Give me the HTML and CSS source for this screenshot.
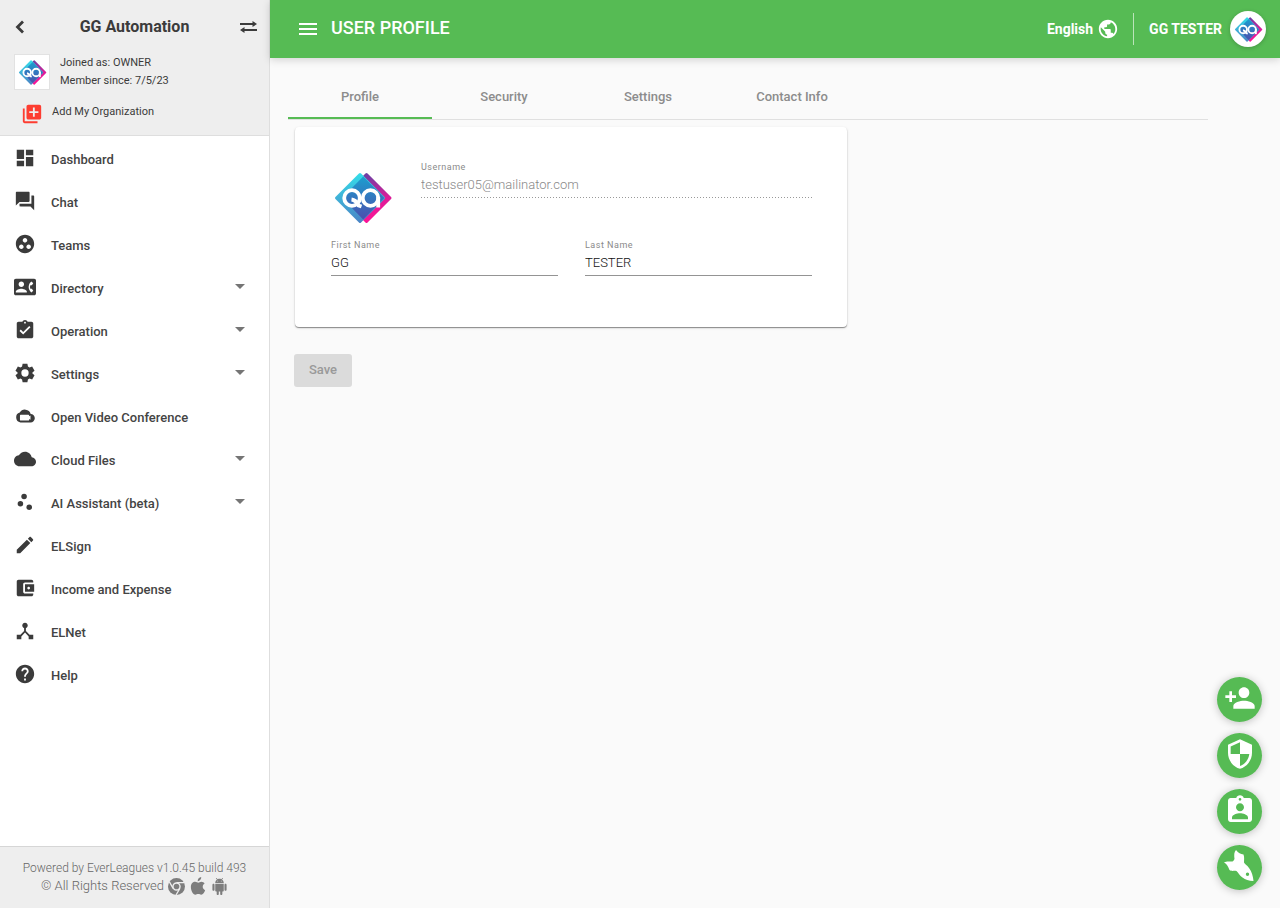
FILE: index.html
```html
<!DOCTYPE html>
<html lang="en">
<head>
<meta charset="utf-8">
<title>User Profile</title>
<meta name="viewport" content="width=device-width, initial-scale=1">
<link rel="stylesheet" href="styles.css">
</head>
<body>
<svg class="defs" aria-hidden="true">
  <defs>
    <linearGradient id="cyan" x1="0" y1="0" x2="0" y2="1"><stop offset="0" stop-color="#35dbe8"/><stop offset="1" stop-color="#4a86c6"/></linearGradient>
    <linearGradient id="pink" x1="0" y1="0" x2="0" y2="1"><stop offset="0" stop-color="#6d3fa4"/><stop offset=".5" stop-color="#dd1c98"/><stop offset="1" stop-color="#fa1496"/></linearGradient>
    <linearGradient id="blue" x1="0" y1="0" x2="0" y2="1"><stop offset="0" stop-color="#1c9ecf"/><stop offset="1" stop-color="#4a4fae"/></linearGradient>
    <symbol id="logo" viewBox="0 0 64 64">
      <path d="M35.500 8.500 59 32 35.500 55.500 12 32z" fill="url(#pink)" stroke="url(#pink)" stroke-width="3" stroke-linejoin="round"/>
      <path d="M29 8.500 52.500 32 29 55.500 5.500 32z" fill="url(#cyan)" stroke="url(#cyan)" stroke-width="3" stroke-linejoin="round"/>
      <path d="M32.200 10.500 53.500 32 32.200 53.500 15 36V28z" fill="url(#blue)"/>
      <g fill="none" stroke="#fff" stroke-width="3.800">
        <circle cx="21" cy="32" r="7.800"/>
        <path d="M20.500 33.500Q25 34 27.500 39.500L30.500 40.500"/>
        <circle cx="39.500" cy="32" r="7.800"/>
        <path d="M47.200 31v10.500"/>
      </g>
    </symbol>
  </defs>
</svg>
<div class="app">
  <aside class="sidebar">
    <div class="org">
      <div class="org-top">
        <button class="icon-btn" type="button" aria-label="Back"><svg width="10" height="14" viewBox="0 0 10 14"><path d="M8 1.500 2.500 7 8 12.500" fill="none" stroke="#3b3b3b" stroke-width="2.800"/></svg></button>
        <h2 class="org-name">GG Automation</h2>
        <button class="icon-btn" type="button" aria-label="Switch organization"><svg width="17" height="12" viewBox="0 0 17 12"><path d="M0 3h14M3 9h14" stroke="#3b3b3b" stroke-width="1.800"/><path d="M12.500 0 17 3l-4.500 3zM4.500 6 0 9l4.500 3z" fill="#3b3b3b"/></svg></button>
      </div>
      <div class="org-info">
        <span class="org-logo"><svg width="31" height="31" aria-hidden="true"><use href="#logo"/></svg></span>
        <p class="org-text">Joined as: OWNER<br>Member since: 7/5/23</p>
      </div>
      <button class="add-org" type="button"><svg width="22" height="22" viewBox="0 0 24 24"><path fill="#fd3d31" d="M4 6H2v14c0 1.100.9 2 2 2h14v-2H4V6zm16-4H8c-1.100 0-2 .9-2 2v12c0 1.100.9 2 2 2h12c1.100 0 2-.9 2-2V4c0-1.100-.9-2-2-2zm-1 9h-4v4h-2v-4H9V9h4V5h2v4h4v2z"/></svg><span>Add My Organization</span></button>
    </div>
    <nav class="nav">
      <a class="nav-item" href="#"><svg viewBox="0 0 24 24"><path d="M3 13h8V3H3v10zm0 8h8v-6H3v6zm10 0h8V11h-8v10zm0-18v6h8V3h-8z"/></svg><span>Dashboard</span></a>
      <a class="nav-item" href="#"><svg viewBox="0 0 24 24"><path d="M21 6h-2v9H6v2c0 .55.45 1 1 1h11l4 4V7c0-.55-.45-1-1-1zm-4 6V3c0-.55-.45-1-1-1H3c-.55 0-1 .45-1 1v14l4-4h10c.55 0 1-.45 1-1z"/></svg><span>Chat</span></a>
      <a class="nav-item" href="#"><svg viewBox="0 0 24 24"><path d="M12 2C6.480 2 2 6.480 2 12s4.480 10 10 10 10-4.480 10-10S17.520 2 12 2zM8 17.500c-1.380 0-2.500-1.120-2.500-2.500s1.120-2.500 2.500-2.500 2.500 1.120 2.500 2.500-1.120 2.500-2.500 2.500zM9.500 8c0-1.380 1.120-2.500 2.500-2.500s2.500 1.120 2.500 2.500-1.120 2.500-2.500 2.500S9.500 9.380 9.500 8zm6.500 9.500c-1.380 0-2.500-1.120-2.500-2.500s1.120-2.500 2.500-2.500 2.500 1.120 2.500 2.500-1.120 2.500-2.500 2.500z"/></svg><span>Teams</span></a>
      <a class="nav-item has-menu" href="#"><svg viewBox="0 0 24 24"><path d="M22 3H2C.9 3 0 3.900 0 5v14c0 1.100.9 2 2 2h20c1.100 0 1.990-.9 1.990-2L24 5c0-1.100-.9-2-2-2zM8 6c1.660 0 3 1.340 3 3s-1.340 3-3 3-3-1.340-3-3 1.340-3 3-3zm6 12H2v-1c0-2 4-3.100 6-3.100s6 1.100 6 3.100v1zm3.850-4h1.640L21 16l-1.990 1.990c-1.310-.98-2.280-2.380-2.730-3.990-.18-.64-.28-1.310-.28-2s.1-1.360.28-2c.45-1.620 1.420-3.010 2.730-3.990L21 8l-1.510 2h-1.640c-.22.630-.35 1.300-.35 2s.13 1.370.35 2z"/></svg><span>Directory</span></a>
      <a class="nav-item has-menu" href="#"><svg viewBox="0 0 24 24"><path d="M19 3h-4.180C14.400 1.840 13.300 1 12 1c-1.300 0-2.400.84-2.820 2H5c-1.100 0-2 .9-2 2v14c0 1.100.9 2 2 2h14c1.100 0 2-.9 2-2V5c0-1.100-.9-2-2-2zm-7 0c.55 0 1 .45 1 1s-.45 1-1 1-1-.45-1-1 .45-1 1-1zm-2 14l-4-4 1.410-1.410L10 14.170l6.590-6.590L18 9l-8 8z"/></svg><span>Operation</span></a>
      <a class="nav-item has-menu" href="#"><svg viewBox="0 0 24 24"><path fill-rule="evenodd" d="M9.400 2h5.200l.6 3 1.700 1 2.900-1 2.600 4.500L20.100 11.500v1L22.400 14.500 19.800 19l-2.900-1-1.700 1-.6 3H9.400l-.6-3-1.700-1-2.900 1L1.600 14.500 3.900 12.500v-1L1.600 9.500 4.200 5l2.900 1 1.700-1zM12 8a4 4 0 1 0 0 8 4 4 0 0 0 0-8z"/></svg><span>Settings</span></a>
      <a class="nav-item" href="#"><svg viewBox="0 0 24 24"><path fill-rule="evenodd" d="M18.200 9.800A6.500 6.500 0 0 0 6.300 8.300 5.500 5.500 0 0 0 7 19h11a4.600 4.600 0 0 0 .2-9.200zM7.500 10.500h8c.5 0 1 .4 1 1v.8l1.500-.8v4.500l-1.500-.8v.8c0 .5-.4 1-1 1h-8c-.5 0-1-.4-1-1v-4.500c0-.5.400-1 1-1z"/></svg><span>Open Video Conference</span></a>
      <a class="nav-item has-menu" href="#"><svg viewBox="0 0 24 24"><path d="M19.350 10.040C18.670 6.590 15.640 4 12 4 9.110 4 6.600 5.640 5.350 8.040 2.340 8.360 0 10.910 0 14c0 3.310 2.690 6 6 6h13c2.760 0 5-2.240 5-5 0-2.640-2.050-4.780-4.650-4.960z"/></svg><span>Cloud Files</span></a>
      <a class="nav-item has-menu" href="#"><svg viewBox="0 0 24 24"><circle cx="7" cy="14" r="3"/><circle cx="11" cy="6" r="3"/><circle cx="16.600" cy="17.600" r="3"/></svg><span>AI Assistant (beta)</span></a>
      <a class="nav-item" href="#"><svg viewBox="0 0 24 24"><path d="M3 17.250V21h3.750L17.810 9.940l-3.750-3.750L3 17.250zM20.710 7.040c.39-.39.39-1.020 0-1.410l-2.340-2.340c-.39-.39-1.020-.39-1.410 0l-1.830 1.830 3.750 3.750 1.830-1.830z"/></svg><span>ELSign</span></a>
      <a class="nav-item" href="#"><svg viewBox="0 0 24 24"><path d="M21 18v1c0 1.100-.9 2-2 2H5c-1.110 0-2-.9-2-2V5c0-1.100.89-2 2-2h14c1.100 0 2 .9 2 2v1h-9c-1.110 0-2 .9-2 2v8c0 1.100.89 2 2 2h9zm-9-2h10V8H12v8zm4-2.500c-.83 0-1.500-.67-1.500-1.500s.67-1.500 1.500-1.500 1.500.67 1.500 1.500-.67 1.500-1.500 1.500z"/></svg><span>Income and Expense</span></a>
      <a class="nav-item" href="#"><svg viewBox="0 0 24 24"><path d="M17 16l-4-4V8.820C14.160 8.400 15 7.300 15 6c0-1.660-1.340-3-3-3S9 4.340 9 6c0 1.300.84 2.400 2 2.820V12l-4 4H3v5h5v-3.050l4-4.200 4 4.200V21h5v-5h-4z"/></svg><span>ELNet</span></a>
      <a class="nav-item" href="#"><svg viewBox="0 0 24 24"><path d="M12 2C6.480 2 2 6.480 2 12s4.480 10 10 10 10-4.480 10-10S17.520 2 12 2zm1 17h-2v-2h2v2zm2.070-7.750l-.9.920C13.450 12.900 13 13.500 13 15h-2v-.5c0-1.100.45-2.100 1.170-2.830l1.240-1.260c.37-.36.59-.86.59-1.410 0-1.100-.9-2-2-2s-2 .9-2 2H8c0-2.210 1.790-4 4-4s4 1.790 4 4c0 .88-.36 1.680-.93 2.250z"/></svg><span>Help</span></a>
    </nav>
    <footer class="powered">
      <p>Powered by EverLeagues v1.0.45 build 493</p>
      <p class="rights"><span>© All Rights Reserved</span>
        <a href="#" aria-label="Chrome"><svg width="17" height="17" viewBox="0 0 24 24"><circle cx="12" cy="12" r="12" fill="#7d7d7d"/><path d="M12 6.500h11M7.200 14.700 1.800 5.200M16.800 14.700 11.300 24" stroke="#eee" stroke-width="1.800"/><circle cx="12" cy="12" r="5" fill="#7d7d7d" stroke="#eee" stroke-width="2"/></svg></a>
        <a href="#" aria-label="Apple"><svg width="18" height="18" viewBox="0 0 24 24"><path fill="#7d7d7d" d="M16.500 6.300c1.900 0 3.400 1 4.300 2.300-3.700 2.100-3.100 7.300.7 8.900-.8 2.400-2.900 6-5.200 6-1.500 0-2.100-.9-3.900-.9s-2.500.9-3.900.9C5.300 23.500 2.500 18 2.500 13.500c0-4.600 2.900-7.100 5.700-7.100 1.800 0 3.200 1.200 4.300 1.200 1 0 2.300-1.300 4-1.300zM16.300 0c.3 2.900-2 5.600-4.700 5.500C11.300 2.800 13.700.2 16.300 0z"/></svg></a>
        <a href="#" aria-label="Android"><svg width="17" height="17" viewBox="0 0 24 24"><path fill="#7d7d7d" d="M6 18c0 .55.45 1 1 1h1v3.500c0 .83.67 1.500 1.500 1.500s1.500-.67 1.500-1.500V19h2v3.500c0 .83.67 1.500 1.500 1.500s1.500-.67 1.500-1.500V19h1c.55 0 1-.45 1-1V8H6v10zM3.500 8C2.670 8 2 8.670 2 9.500v7c0 .83.67 1.500 1.500 1.500S5 17.330 5 16.500v-7C5 8.670 4.330 8 3.500 8zm17 0c-.83 0-1.500.67-1.500 1.500v7c0 .83.67 1.500 1.500 1.500s1.500-.67 1.500-1.500v-7c0-.83-.67-1.500-1.500-1.500zm-4.970-5.840l1.300-1.300c.2-.2.200-.51 0-.71-.2-.2-.51-.2-.71 0l-1.480 1.480C13.850 1.230 12.950 1 12 1c-.96 0-1.860.23-2.660.63L7.850.15c-.2-.2-.51-.2-.71 0-.2.2-.2.510 0 .71l1.310 1.310C6.970 3.260 6 5.010 6 7h12c0-1.990-.97-3.750-2.470-4.840zM10 5H9V4h1v1zm5 0h-1V4h1v1z"/></svg></a>
      </p>
    </footer>
  </aside>

  <div class="page">
    <header class="topbar">
      <button class="icon-btn" type="button" aria-label="Menu"><svg width="18" height="12" viewBox="0 0 18 12"><path d="M0 1h18M0 6h18M0 11h18" stroke="#fff" stroke-width="2"/></svg></button>
      <h1 class="title">USER PROFILE</h1>
      <button class="language" type="button"><span>English</span><svg width="22" height="22" viewBox="0 0 24 24"><path fill="#fff" d="M12 2C6.480 2 2 6.480 2 12s4.480 10 10 10 10-4.480 10-10S17.520 2 12 2zm-1 17.930c-3.950-.49-7-3.850-7-7.930 0-.62.08-1.210.21-1.790L9 15v1c0 1.100.9 2 2 2v1.930zm6.900-2.540c-.26-.81-1-1.390-1.900-1.390h-1v-3c0-.55-.45-1-1-1H8v-2h2c.55 0 1-.45 1-1V7h2c1.100 0 2-.9 2-2v-.41c2.930 1.190 5 4.060 5 7.410 0 2.080-.8 3.970-2.100 5.390z"/></svg></button>
      <button class="account" type="button"><span>GG TESTER</span><span class="avatar"><svg width="31" height="31" aria-hidden="true"><use href="#logo"/></svg></span></button>
    </header>
    <main class="content">
      <nav class="tabs">
        <a class="tab active" href="#" aria-current="page">Profile</a>
        <a class="tab" href="#">Security</a>
        <a class="tab" href="#">Settings</a>
        <a class="tab" href="#">Contact Info</a>
      </nav>
      <form class="profile">
        <section class="card">
          <div class="identity">
            <svg class="photo" width="64" height="64" aria-hidden="true"><use href="#logo"/></svg>
            <div class="field"><label for="username">Username</label><input id="username" value="testuser05@mailinator.com" disabled></div>
          </div>
          <div class="names">
            <div class="field"><label for="first">First Name</label><input id="first" value="GG"></div>
            <div class="field"><label for="last">Last Name</label><input id="last" value="TESTER"></div>
          </div>
        </section>
        <button class="save" type="submit" disabled>Save</button>
      </form>
    </main>
  </div>
</div>
<div class="fabs">
  <button class="fab" type="button" aria-label="Add person"><svg width="32" height="32" viewBox="0 0 24 24"><path d="M15 12c2.210 0 4-1.790 4-4s-1.790-4-4-4-4 1.790-4 4 1.790 4 4 4zm-9-2V7H4v3H1v2h3v3h2v-3h3v-2H6zm9 4c-2.670 0-8 1.340-8 4v2h16v-2c0-2.660-5.330-4-8-4z"/></svg></button>
  <button class="fab" type="button" aria-label="Security"><svg width="32" height="32" viewBox="0 0 24 24"><path d="M12 1L3 5v6c0 5.550 3.840 10.740 9 12 5.160-1.260 9-6.450 9-12V5l-9-4zm0 10.990h7c-.53 4.120-3.280 7.790-7 8.940V12H5V6.300l7-3.110v8.800z"/></svg></button>
  <button class="fab" type="button" aria-label="Assignments"><svg width="32" height="32" viewBox="0 0 24 24"><path d="M19 3h-4.180C14.400 1.840 13.300 1 12 1c-1.300 0-2.400.84-2.820 2H5c-1.100 0-2 .9-2 2v14c0 1.100.9 2 2 2h14c1.100 0 2-.9 2-2V5c0-1.100-.9-2-2-2zm-7 0c.55 0 1 .45 1 1s-.45 1-1 1-1-.45-1-1 .45-1 1-1zm0 4c1.660 0 3 1.340 3 3s-1.340 3-3 3-3-1.340-3-3 1.340-3 3-3zm6 12H6v-1.400c0-2 4-3.100 6-3.100s6 1.100 6 3.100V19z"/></svg></button>
  <button class="fab" type="button" aria-label="Fish"><svg width="32" height="32" viewBox="0 0 32 32"><path fill-rule="evenodd" d="M12 0C10 2 10 5 10.500 9c-1 2-1.500 2.500-3 2.500-3 0-5-.5-7.500 1 3 1.500 4 4 5.500 7.500 2 1.500 4 .5 7 1 2 2 3 4.500 6 6.500 3 2 6 3.500 11 3.500-.5-5-1.500-9-4.500-13-2-3-4.500-4-5-5.500 0-3 .5-5-.5-8-3-.5-5-1.500-7.500-4.500zM23.500 22.500a1.700 1.700 0 1 0 0 3.400 1.700 1.700 0 0 0 0-3.400z"/></svg></button>
</div>
</body>
</html>
```
FILE: styles.css
```css
* { box-sizing: border-box; }
body { margin: 0; font-family: Roboto, "Liberation Sans", sans-serif; font-size: 13px; color: #3b3b3b; background: #fafafa; }
h1, h2, p { margin: 0; }
button { font: inherit; color: inherit; border: 0; padding: 0; background: none; cursor: pointer; }
a { color: inherit; text-decoration: none; }
svg { display: block; flex: none; }
.defs { position: absolute; width: 0; height: 0; }
.app { display: flex; min-height: 100vh; }

.sidebar { width: 270px; flex: none; display: flex; flex-direction: column; background: #fff; border-right: 1px solid #dedede; }
.org { background: #eee; border-bottom: 1px solid #dedede; padding: 18px 12px 10px 14px; }
.org-top { display: flex; align-items: center; justify-content: space-between; height: 18px; }
.org-top .icon-btn:first-child { margin-left: 1px; }
.org-name { font-size: 16px; line-height: 18px; font-weight: 700; margin-left: 4px; }
.org-info { display: flex; gap: 10px; margin-top: 18px; }
.org-logo { width: 36px; height: 36px; background: #fff; border: 1px solid #e2e2e2; display: grid; place-items: center; }
.org-text { font-size: 11px; line-height: 18px; }
.add-org { display: flex; align-items: flex-start; gap: 9px; margin: 13px 0 0 7px; font-size: 11px; line-height: 18px; height: 22px; }

.nav { flex: 1; padding-top: 2px; }
.nav-item { display: flex; align-items: center; gap: 15px; height: 43px; padding: 0 24px 0 14px; font-weight: 500; line-height: 18px; color: #444; }
.nav-item svg { width: 22px; height: 22px; fill: #3b3b3b; margin-bottom: 4px; }
.nav-item span { padding-top: 1px; }
.has-menu::after { content: ""; margin-left: auto; margin-bottom: 4px; border: 5px solid transparent; border-top-color: #757575; border-bottom: 0; }

.powered { background: #eee; border-top: 1px solid #d6d6d6; padding: 12px 0 13px; text-align: center; font-size: 12px; font-weight: 300; line-height: 18px; color: #666; }
.rights { display: flex; justify-content: center; align-items: center; gap: 4px; height: 18px; font-size: 13px; }

.page { flex: 1; min-width: 0; }
.topbar { display: flex; align-items: center; height: 58px; padding: 0 14px 0 29px; background: #56bb54; color: #fff; box-shadow: 0 2px 8px rgba(0, 0, 0, .16); }
.title { font-size: 18px; line-height: 24px; font-weight: 500; margin: 0 auto 2px 14px; }
.language { display: flex; align-items: center; gap: 4px; font-size: 14px; font-weight: 700; padding-right: 14px; height: 32px; border-right: 1px solid rgba(255, 255, 255, .6); }
.account { display: flex; align-items: center; gap: 8px; margin-left: 15px; font-size: 14px; font-weight: 700; }
.avatar { display: grid; place-items: center; width: 36px; height: 36px; border-radius: 50%; background: #fff; box-shadow: 0 1px 4px rgba(0, 0, 0, .2); }

.content { padding: 16px 72px 24px 18px; }
.tabs { display: flex; border-bottom: 1px solid #e0e0e0; }
.tab { width: 144px; height: 45px; text-align: center; line-height: 46px; font-weight: 500; color: #8c8c8c; border-bottom: 2px solid transparent; }
.tab.active { border-color: #56bb54; }
.profile { padding-top: 7px; }
.card { width: 60%; min-width: 480px; margin-left: 7px; padding: 33px 35px 51px 36px; background: #fff; border-radius: 4px; box-shadow: 0 1px 1px rgba(0, 0, 0, .4), 0 1px 3px rgba(0, 0, 0, .12); }
.identity { display: flex; gap: 26px; height: 78px; }
.photo { margin-top: 6px; }
.names { display: grid; grid-template-columns: 1fr 1fr; gap: 27px; }
.field { flex: 1; min-width: 0; }
.field label { display: block; font-size: 9px; font-weight: 400; line-height: 14px; letter-spacing: 0.5px; color: #8a8a8a; }
.field input { display: block; width: 100%; height: 24px; padding: 0 0 2px; border: 0; border-bottom: 1px solid #949494; border-radius: 0; outline: 0; background: none; font: 300 13px/20px Roboto, sans-serif; color: #111; }
.field input:disabled { color: #888; border-color: transparent; background: repeating-linear-gradient(90deg, #999 0 1px, transparent 1px 3px) bottom / 100% 1px no-repeat border-box; }
.save { display: block; margin: 27px 0 0 6px; width: 58px; height: 33px; padding-bottom: 2px; border-radius: 3px; background: #dbdbdb; color: #999; font-weight: 500; }

.fabs { position: fixed; right: 18px; bottom: 18px; display: grid; gap: 11px; }
.fab { width: 45px; height: 45px; padding-bottom: 4px; border-radius: 50%; background: #56bb54; display: grid; place-items: center; box-shadow: 0 1px 8px rgba(0, 0, 0, .24); }
.fab svg { fill: #fff; }
```
